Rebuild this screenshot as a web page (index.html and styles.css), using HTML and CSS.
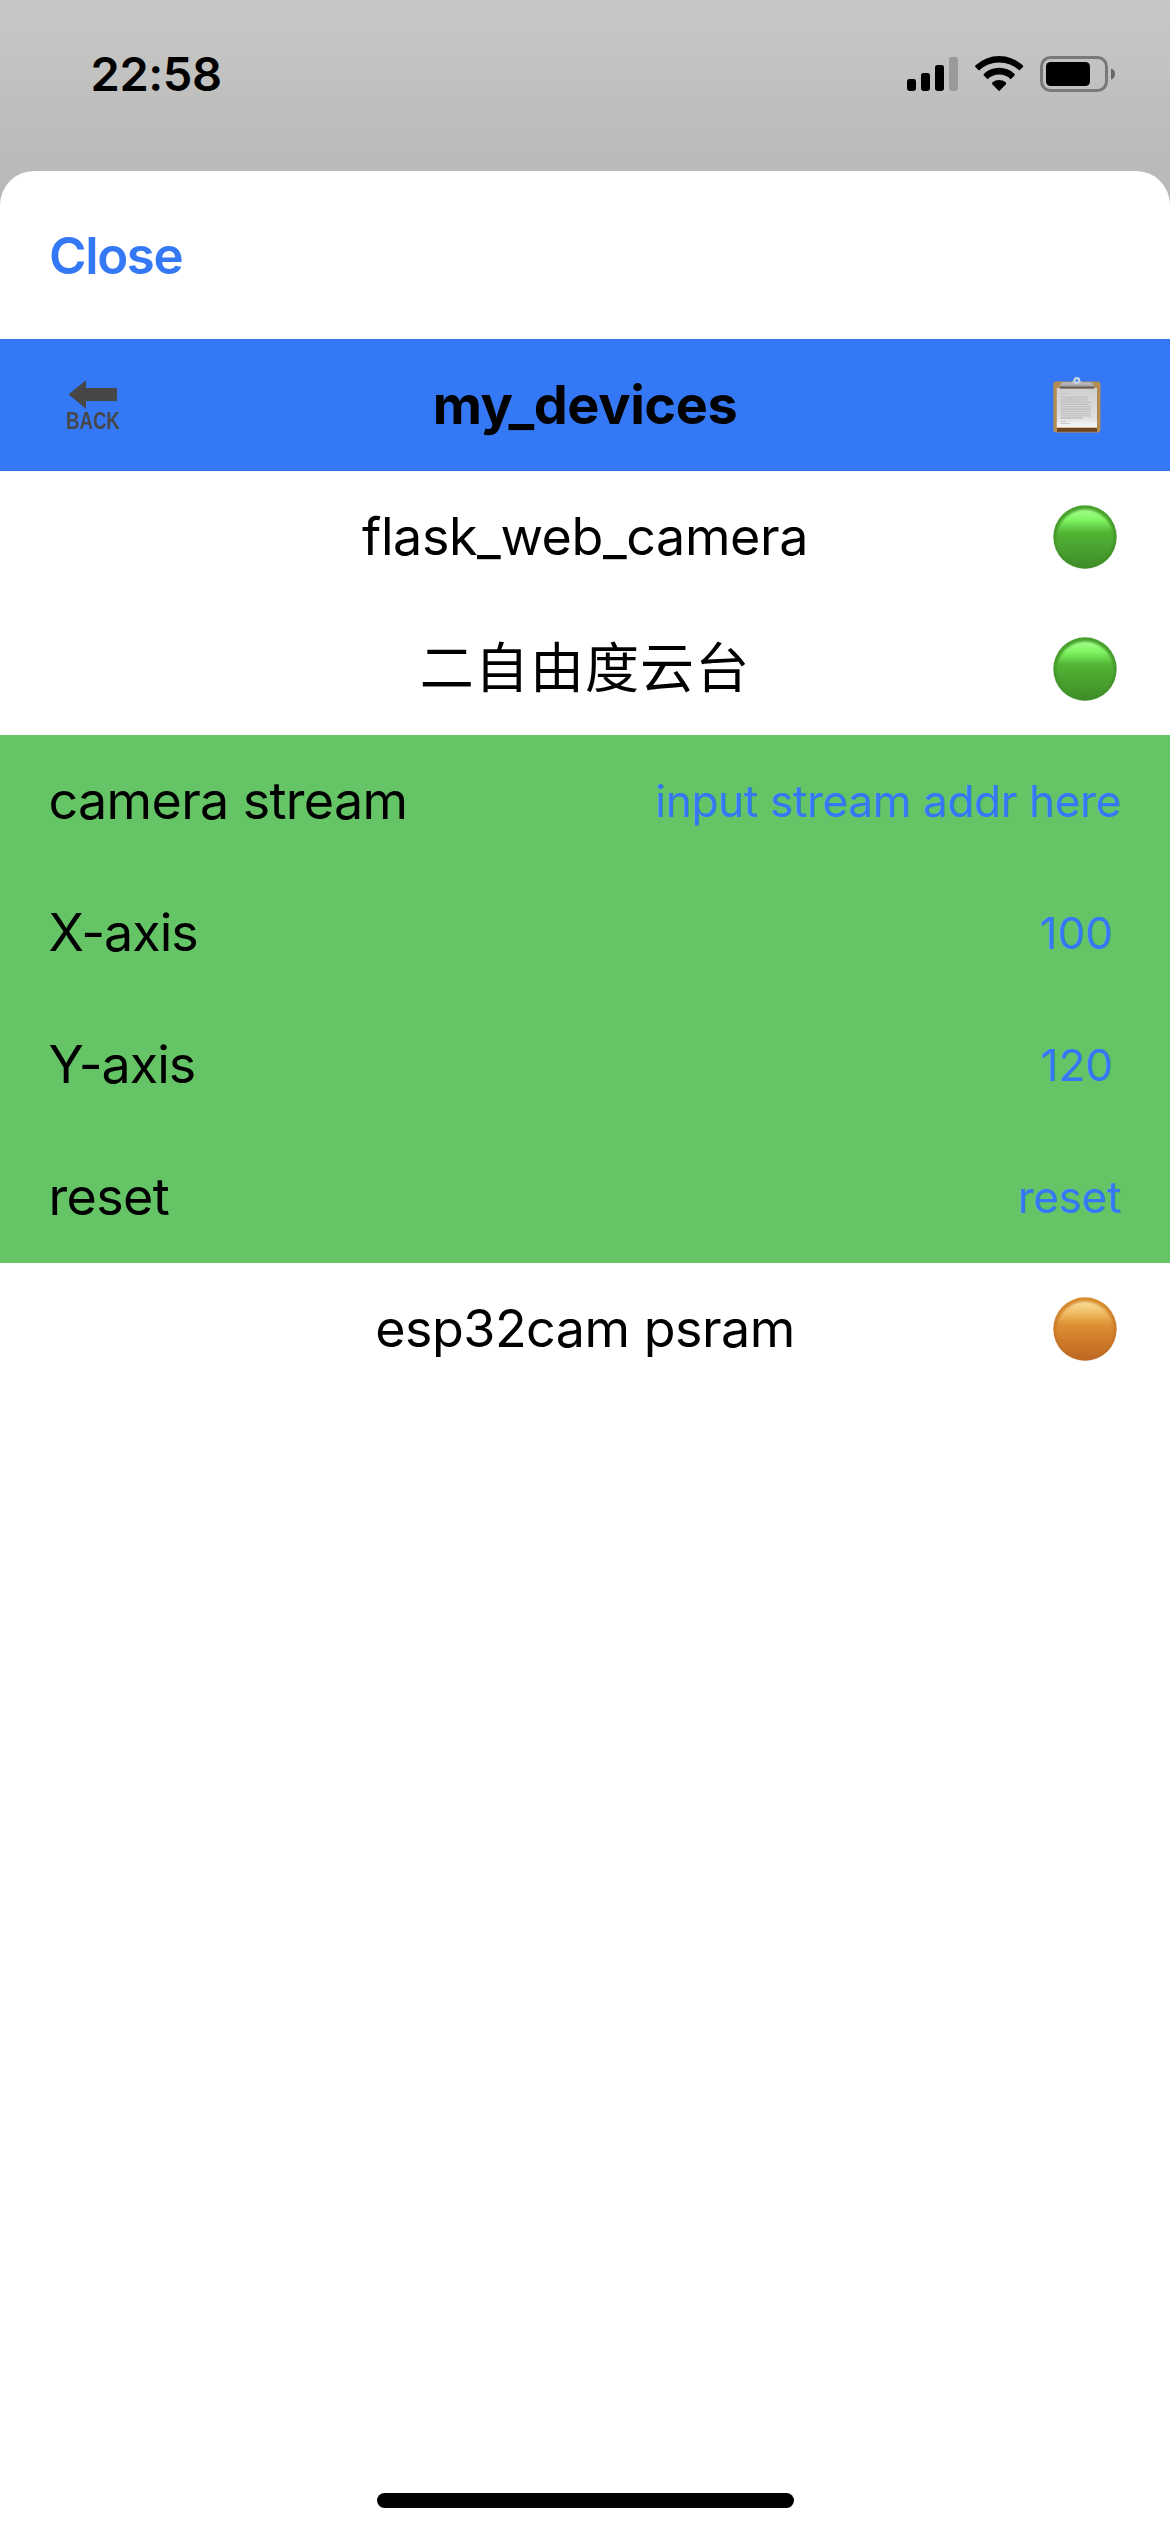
FILE: index.html
```html
<!DOCTYPE html>
<html lang="en">
<head>
<meta charset="utf-8">
<title>my_devices</title>
<link rel="stylesheet" href="styles.css">
</head>
<body>
<svg class="defs" width="0" height="0" aria-hidden="true">
  <defs>
    <linearGradient id="greenRim" x1="0" y1="0" x2="0" y2="1">
      <stop offset="0" stop-color="#4aa32e"/><stop offset="1" stop-color="#3f8c28"/>
    </linearGradient>
    <linearGradient id="greenFill" x1="0" y1="0" x2="0" y2="1">
      <stop offset="0" stop-color="#a2ff8c"/><stop offset=".18" stop-color="#80f562"/><stop offset=".4" stop-color="#52b434"/><stop offset=".65" stop-color="#4ba42f"/><stop offset="1" stop-color="#3f8c28"/>
    </linearGradient>
    <linearGradient id="orangeRim" x1="0" y1="0" x2="0" y2="1">
      <stop offset="0" stop-color="#d98f2f"/><stop offset=".5" stop-color="#cb7a2b"/><stop offset="1" stop-color="#bd6823"/>
    </linearGradient>
    <linearGradient id="orangeFill" x1="0" y1="0" x2="0" y2="1">
      <stop offset="0" stop-color="#f9dd9e"/><stop offset=".18" stop-color="#f0c067"/><stop offset=".4" stop-color="#dd9032"/><stop offset=".65" stop-color="#cf7d2c"/><stop offset="1" stop-color="#bd6823"/>
    </linearGradient>
    <linearGradient id="paper" x1="0" y1="0" x2="0" y2="1">
      <stop offset="0" stop-color="#cfcfcf"/><stop offset=".75" stop-color="#dedede"/><stop offset="1" stop-color="#fafafa"/>
    </linearGradient>
    <linearGradient id="clip" x1="0" y1="0" x2="0" y2="1">
      <stop offset="0" stop-color="#d2d4d8"/><stop offset="1" stop-color="#a5a5a8"/>
    </linearGradient>
    <filter id="soft" x="-10%" y="-10%" width="120%" height="120%"><feGaussianBlur stdDeviation="1"/></filter>
    <symbol id="ball-green" viewBox="0 0 64 64">
      <circle cx="32" cy="32" r="31.7" fill="url(#greenRim)"/>
      <ellipse cx="32" cy="33.5" rx="28.8" ry="29" fill="url(#greenFill)" filter="url(#soft)"/>
    </symbol>
    <symbol id="ball-orange" viewBox="0 0 64 64">
      <circle cx="32" cy="32" r="31.7" fill="url(#orangeRim)"/>
      <ellipse cx="32" cy="33.5" rx="28.8" ry="29" fill="url(#orangeFill)" filter="url(#soft)"/>
    </symbol>
  </defs>
</svg>
<div class="screen">
  <header class="status">
    <span class="clock">22:58</span>
    <svg class="indicators" width="209" height="38" viewBox="0 0 209 38">
      <g>
        <rect x="0" y="24" width="9" height="12" rx="2.4"/>
        <rect x="14" y="18" width="9" height="18" rx="2.4"/>
        <rect x="28" y="10" width="9" height="26" rx="2.4"/>
        <rect x="42" y="2" width="9" height="34" rx="2.4" fill="#999b98"/>
      </g>
      <path d="M68.600 10.300A34.500 34.500 0 0 1 115.700 10.300Q116.700 11.300 115.700 12.300L112.300 15.600A29 29 0 0 0 72 15.600L68.600 12.300Q67.600 11.300 68.600 10.300Z"/>
      <path d="M77 18.700A22.500 22.500 0 0 1 107.300 18.700Q108.300 19.700 107.300 20.700L103.700 24.200A16.800 16.800 0 0 0 80.600 24.200L77 20.700Q76 19.700 77 18.700Z"/>
      <path d="M85.500 27.300A10.500 10.500 0 0 1 98.700 27.300Q99.600 28.400 98.700 29.400L92.800 35.600Q92.100 36.200 91.400 35.600L85.500 29.400Q84.600 28.400 85.500 27.300Z"/>
      <rect x="134.500" y="2.500" width="65" height="33" rx="9" fill="none" stroke="#787a77" stroke-width="3"/>
      <rect x="139" y="7" width="44" height="24" rx="4.500"/>
      <path d="M204 13.500Q208 14.700 208 19T204 24.700Z" fill="#666866"/>
    </svg>
  </header>
  <main class="sheet">
    <nav class="toolbar"><a class="close">Close</a></nav>
    <section class="list">
      <div class="row title">
        <span class="back">
          <svg width="50" height="29" viewBox="0 0 50 29"><path d="M.5 14.500L18 .3V8H49V21H18V28.700Z" fill="#474747"/></svg>
          <span class="back-label">BACK</span>
        </span>
        <h1 class="name heading">my_devices</h1>
        <svg class="clipboard" width="48" height="56" viewBox="0 0 48 56">
          <rect x=".3" y="4.500" width="47.200" height="51" rx="3" fill="#b48d55"/>
          <rect x="4" y="50" width="40" height="4.800" fill="#70481f"/>
          <rect x="3" y="11" width="41.500" height="40" fill="#a7834f"/>
          <rect x="3.700" y="11" width="40.300" height="39.500" fill="url(#paper)"/>
          <path d="M7 9.500V9Q7.500 5.500 11 5.200H17Q19.500 5 20.500 3.500A3.500 3.500 0 0 1 27 3.500Q28 5 30.500 5.200H37Q40.500 5.500 41 9V9.500Z" fill="url(#clip)"/>
          <circle cx="23.800" cy="3.500" r="2.300" fill="#3478f6" stroke="#cbd4e2" stroke-width="2.200"/>
          <rect x="7" y="9.500" width="34" height="2.200" fill="#6b5f5b"/>
          <path d="M7.500 16.500H14M7.500 44.500H13M7.500 46.500H17" stroke="#c4c4c4" stroke-width=".9"/>
          <path d="M7.500 20.500H35M7.500 22.800H34M7.500 25.100H38M7.500 27.400H36M7.500 29.700H39M7.500 32H38M7.500 34.300H37.500M7.500 36.600H38M7.500 38.900H37.500M7.500 41H30" stroke="#c0c0c0" stroke-width="1.300"/>
        </svg>
      </div>
      <div class="row device">
        <span class="name flask">flask_web_camera</span>
        <svg class="ball" width="64" height="64"><use href="#ball-green"/></svg>
      </div>
      <div class="row device">
        <span class="name cjk" lang="zh">二自由度云台</span>
        <svg class="ball" width="64" height="64"><use href="#ball-green"/></svg>
      </div>
      <div class="row setting"><span class="label">camera stream</span><span class="value">input stream addr here</span></div>
      <div class="row setting"><span class="label axis">X-axis</span><span class="value number">100</span></div>
      <div class="row setting"><span class="label axis">Y-axis</span><span class="value number">120</span></div>
      <div class="row setting"><span class="label">reset</span><span class="value">reset</span></div>
      <div class="row device">
        <span class="name">esp32cam psram</span>
        <svg class="ball" width="64" height="64"><use href="#ball-orange"/></svg>
      </div>
    </section>
    <div class="home-bar"></div>
  </main>
</div>
</body>
</html>
```
FILE: styles.css
```css
* { box-sizing: border-box; }

body {
  margin: 0;
  font-family: Inter, "Noto Sans CJK SC", sans-serif;
  color: #000;
}

svg { display: block; flex: none; }
.defs { position: absolute; }

.screen {
  width: 1170px;
  height: 2532px;
  display: flex;
  flex-direction: column;
  overflow: hidden;
  background: linear-gradient(#c7c7c8 0, #c2c2c0 70px, #bcbebb 125px, #b9bbb8 171px, #b6b8b5 210px);
}

.status {
  height: 171px;
  flex: none;
  display: flex;
  justify-content: space-between;
  align-items: flex-start;
  padding: 55px 54px 0 90.5px;
}

.clock {
  font-size: 47px;
  font-weight: 600;
  line-height: 38px;
  letter-spacing: -0.4px;
}

.sheet {
  flex: 1;
  display: flex;
  flex-direction: column;
  align-items: stretch;
  background: #fff;
  border-radius: 34px 34px 0 0;
  padding-bottom: 24px;
}

.toolbar {
  height: 168px;
  display: flex;
  align-items: center;
  padding: 0 49px;
}

.close {
  font-size: 51px;
  font-weight: 600;
  letter-spacing: -1.4px;
  color: #3478f6;
}

.list { flex: 1; }

.row {
  height: 132px;
  display: grid;
  align-items: center;
  line-height: 64px;
  white-space: nowrap;
}

.title, .device {
  grid-template-columns: 1fr auto 1fr;
}

.title { background: #3478f6; }

.back {
  display: flex;
  flex-direction: column;
  align-items: flex-start;
  gap: 3px;
  padding: 0 0 1px 68px;
}

.back-label {
  font: 700 23px/18px "Liberation Sans", sans-serif;
  color: #474747;
  transform: scaleX(.81);
  transform-origin: 0 50%;
  margin-left: -2px;
}

.name {
  grid-column: 2;
  margin: 0;
  font-size: 52px;
  font-weight: 400;
  letter-spacing: -0.5px;
}

.heading {
  font-size: 54px;
  font-weight: 700;
  letter-spacing: -0.4px;
}

.flask { letter-spacing: -0.4px; }

.cjk {
  font-size: 54px;
  letter-spacing: 1.1px;
}

.ball {
  justify-self: end;
  margin-right: 53.5px;
}

.clipboard {
  justify-self: end;
  margin-right: 69px;
}

.setting {
  grid-template-columns: auto auto;
  justify-content: space-between;
  padding: 0 49px 0 48.5px;
  background: #65c466;
}

.label {
  font-size: 52px;
  letter-spacing: -0.65px;
}

.axis { letter-spacing: -1px; }

.value {
  font-size: 44px;
  letter-spacing: -0.3px;
  color: #3478f6;
}

.number {
  letter-spacing: 0;
  padding-right: 8px;
}

.home-bar {
  align-self: center;
  width: 417px;
  height: 15px;
  border-radius: 8px;
  background: #000;
}
```
